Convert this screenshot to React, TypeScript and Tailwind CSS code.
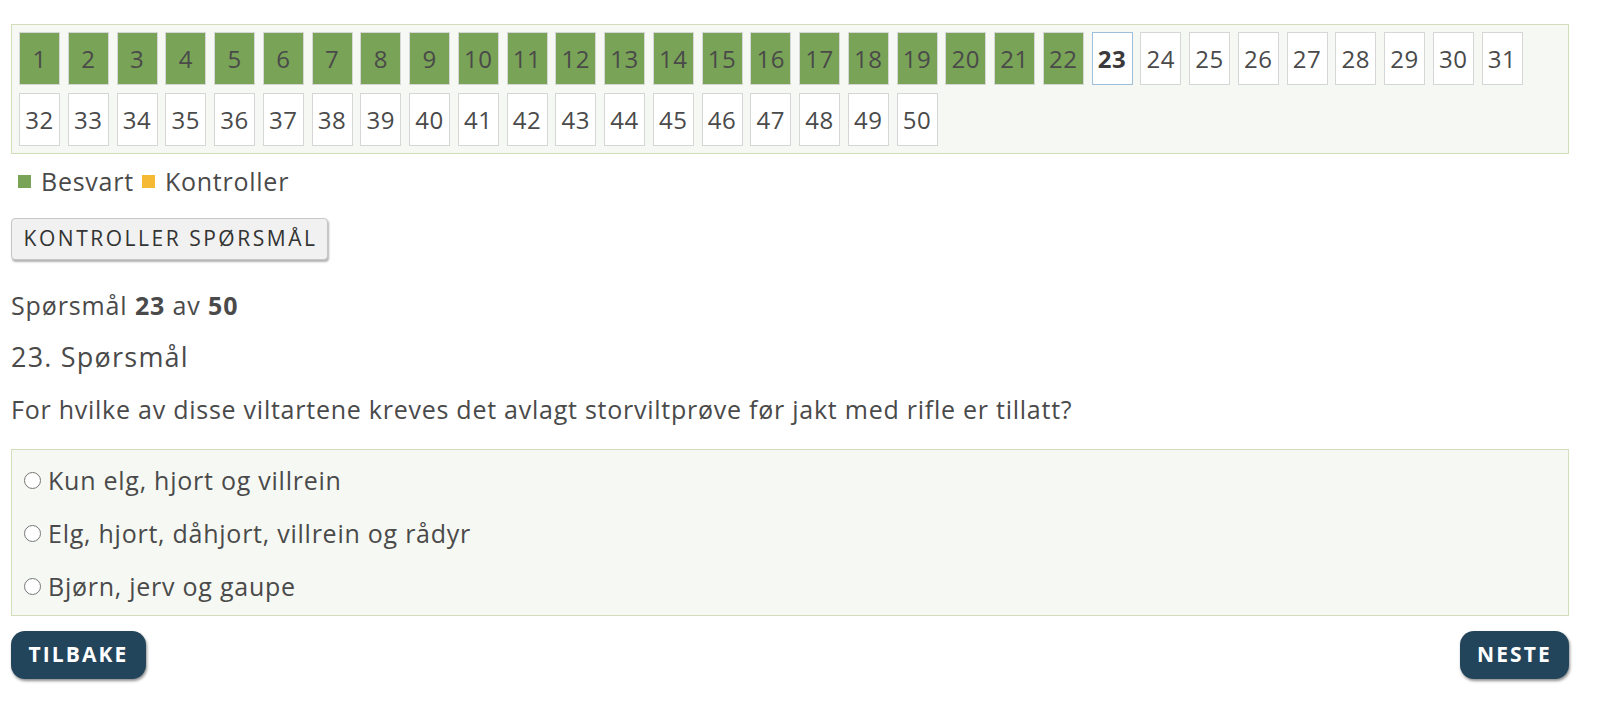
import React from "react";

const TOTAL = 50;
const CURRENT = 23;

const ANSWERS = [
  "Kun elg, hjort og villrein",
  "Elg, hjort, dåhjort, villrein og rådyr",
  "Bjørn, jerv og gaupe",
];

function QuestionCell({ n }: { n: number }) {
  const answered = n < CURRENT;
  const current = n === CURRENT;
  return (
    <div
      className={
        "w-[41px] h-[53px] flex items-center justify-center border text-[24px] tracking-[0.02em] " +
        (answered
          ? "bg-[#79a356] border-[#d6d6d6] text-[#4a4a4a]"
          : current
          ? "bg-white border-[#9dbfdc] font-bold text-[#3a3a3a]"
          : "bg-white border-[#d6d6d6] text-[#4a4a4a]")
      }
    >
      {n}
    </div>
  );
}

export default function App() {
  const numbers = Array.from({ length: TOTAL }, (_, i) => i + 1);

  return (
    <div
      className="min-h-screen bg-white text-[#4a4a4a] pl-[11px] pt-[24px]"
      style={{ fontFamily: '"Open Sans", sans-serif' }}
    >
      <div className="w-[1558px]">
        {/* question overview */}
        <div className="border border-[#d2deb8] bg-[#f6f8f3] p-[7px] flex flex-wrap gap-x-[7.75px] gap-y-[8px]">
          {numbers.map((n) => (
            <QuestionCell key={n} n={n} />
          ))}
        </div>

        {/* legend */}
        <div className="mt-[12px] h-[30px] flex items-center text-[25px] leading-[30px] tracking-[0.03em] pl-[7px]">
          <span className="w-[13px] h-[13px] bg-[#79a356] inline-block mr-[10px]" />
          <span>Besvart</span>
          <span className="w-[13px] h-[13px] bg-[#f6b934] inline-block ml-[8px] mr-[10px]" />
          <span>Kontroller</span>
        </div>

        <button className="mt-[22px] h-[42px] w-[317px] rounded-[4px] border border-[#c6c6c6] bg-[#f1f1f1] shadow-[1px_2px_2px_rgba(0,0,0,0.3)] text-[21px] tracking-[0.12em] text-[#333] flex items-center justify-center pl-[2px]">
          KONTROLLER SPØRSMÅL
        </button>

        <div className="mt-[30px] text-[25px] leading-[30px] tracking-[0.035em]">
          Spørsmål <b>23</b> av <b>50</b>
        </div>

        <h2 className="mt-[21px] text-[27px] leading-[32px] tracking-[0.045em]">23. Spørsmål</h2>

        <p className="mt-[21px] text-[25px] leading-[30px] tracking-[0.03em]">
          For hvilke av disse viltartene kreves det avlagt storviltprøve før jakt med rifle er tillatt?
        </p>

        {/* answers */}
        <div className="mt-[25px] border border-[#d2deb8] bg-[#f6f8f3] py-[3px] pl-[12px]">
          {ANSWERS.map((a) => (
            <label
              key={a}
              className="h-[53px] flex items-center text-[25px] leading-[30px] tracking-[0.03em] cursor-pointer"
            >
              <span className="w-[17px] h-[17px] rounded-full border border-[#767676] bg-white mr-[7px] shrink-0 translate-y-[1px]" />
              <span>{a}</span>
            </label>
          ))}
        </div>

        <div className="mt-[15px] flex justify-between">
          <button className="h-[48px] w-[135px] rounded-[14px] bg-[#22455b] text-white font-bold text-[21px] tracking-[0.1em] shadow-[1px_2px_3px_rgba(0,0,0,0.45)]">
            TILBAKE
          </button>
          <button className="h-[48px] w-[109px] rounded-[14px] bg-[#22455b] text-white font-bold text-[21px] tracking-[0.1em] shadow-[1px_2px_3px_rgba(0,0,0,0.45)]">
            NESTE
          </button>
        </div>
      </div>
    </div>
  );
}
